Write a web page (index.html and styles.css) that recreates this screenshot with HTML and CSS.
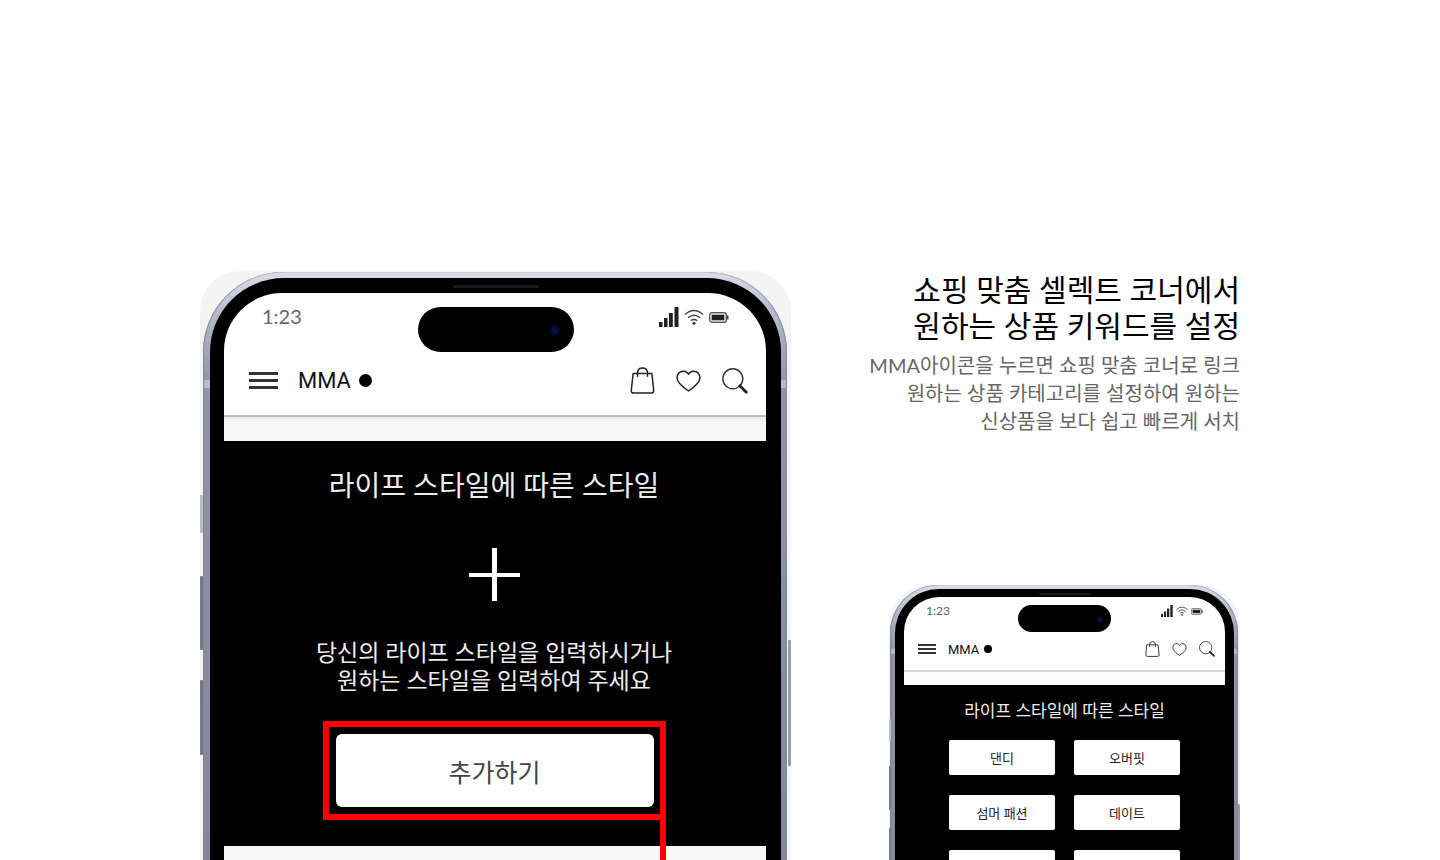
FILE: index.html
```html
<!DOCTYPE html>
<html lang="ko">
<head>
<meta charset="utf-8">
<title>MMA</title>
<link rel="stylesheet" href="styles.css">
</head>
<body>
<svg class="sprite" aria-hidden="true">
  <symbol id="signal" viewBox="0 0 20 20"><path d="M0 15h3.500v5H0zM5 11h3.500v9H5zM10 6h3.800v14H10zM15.500 0h4v20h-4z" fill="#222"/></symbol>
  <symbol id="wifi" viewBox="0 0 20 16"><g fill="none" stroke="#444" stroke-width="1.500"><path d="M1 5.500Q10-2.500 19 5.500M4 8.800Q10 3.600 16 8.800M6.800 11.600Q10 9.200 13.200 11.600"/></g><circle cx="10" cy="14.300" r="1.500" fill="#333"/></symbol>
  <symbol id="battery" viewBox="0 0 20 11"><rect x=".6" y=".6" width="16.800" height="9.800" rx="2.500" fill="#ddd" stroke="#555" stroke-width="1.200"/><rect x="2.800" y="2.800" width="12.400" height="5.400" fill="#222"/><path d="M18 3.500h1.500v4H18z" fill="#444"/></symbol>
  <symbol id="bag" viewBox="0 0 24 27"><g fill="none" stroke="#222" stroke-width="1.500" stroke-linejoin="round" stroke-linecap="round"><path d="M2.600 6.500h18.800L23.200 23.500q.2 2.500-2.400 2.500H3.200Q.6 26 .8 23.500z"/><path d="M7 9.200V6Q7 1 12 1t5 5v3.200"/></g></symbol>
  <symbol id="heart" viewBox="0 0 24 22"><path d="M12 4.200C9.800.2 4.600.5 2.300 3-.2 6.300.5 10.600 3.400 13.800 6 16.800 9 19 12 21c3-2 6-4.200 8.600-7.200 2.900-3.200 3.600-7.500 1.100-10.800C19.400.5 14.200.2 12 4.200z" fill="none" stroke="#222" stroke-width="1.500" stroke-linejoin="round"/></symbol>
  <symbol id="search" viewBox="0 0 26 26"><circle cx="10.800" cy="10.800" r="10" fill="none" stroke="#333" stroke-width="1.400"/><path d="M17.800 17.800l6.500 6.500" stroke="#222" stroke-width="2.800" stroke-linecap="round"/></symbol>
</svg>

<main class="page">
  <section class="phone phone-large">
    <i class="key key-switch"></i><i class="key key-up"></i><i class="key key-down"></i><i class="key key-power"></i>
    <div class="metal"><div class="bezel"><div class="screen">
      <div class="status">
        <span class="time">1:23</span>
        <span class="island"><i class="lens"></i></span>
        <span class="signals">
          <svg class="signal"><use href="#signal"/></svg>
          <svg class="wifi"><use href="#wifi"/></svg>
          <svg class="battery"><use href="#battery"/></svg>
        </span>
      </div>
      <header class="bar">
        <button class="menu" aria-label="메뉴"><i></i><i></i><i></i></button>
        <a class="brand" href="#">MMA<i class="dot"></i></a>
        <nav class="tools">
          <button aria-label="장바구니"><svg class="bag"><use href="#bag"/></svg></button>
          <button aria-label="찜"><svg class="heart"><use href="#heart"/></svg></button>
          <button aria-label="검색"><svg class="search"><use href="#search"/></svg></button>
        </nav>
      </header>
      <div class="strip"></div>
      <div class="panel">
        <h2 class="title">라이프 스타일에 따른 스타일</h2>
        <div class="plus"></div>
        <p class="prompt">당신의 라이프 스타일을 입력하시거나<br>원하는 스타일을 입력하여 주세요</p>
        <div class="marker"><button class="add">추가하기</button></div>
      </div>
      <div class="below"></div>
    </div></div></div>
  </section>

  <div class="side">
    <div class="copy">
      <h1>쇼핑 맞춤 셀렉트 코너에서<br>원하는 상품 키워드를 설정</h1>
      <p>MMA아이콘을 누르면 쇼핑 맞춤 코너로 링크<br>원하는 상품 카테고리를 설정하여 원하는<br>신상품을 보다 쉽고 빠르게 서치</p>
    </div>
    <section class="phone phone-small">
      <i class="key key-switch"></i><i class="key key-up"></i><i class="key key-down"></i><i class="key key-power"></i>
      <div class="metal"><div class="bezel"><div class="screen">
        <div class="status">
          <span class="time">1:23</span>
          <span class="island"><i class="lens"></i></span>
          <span class="signals">
            <svg class="signal"><use href="#signal"/></svg>
            <svg class="wifi"><use href="#wifi"/></svg>
            <svg class="battery"><use href="#battery"/></svg>
          </span>
        </div>
        <header class="bar">
          <button class="menu" aria-label="메뉴"><i></i><i></i><i></i></button>
          <a class="brand" href="#">MMA<i class="dot"></i></a>
          <nav class="tools">
            <button aria-label="장바구니"><svg class="bag"><use href="#bag"/></svg></button>
            <button aria-label="찜"><svg class="heart"><use href="#heart"/></svg></button>
            <button aria-label="검색"><svg class="search"><use href="#search"/></svg></button>
          </nav>
        </header>
        <div class="strip"></div>
        <div class="panel">
          <h2 class="title">라이프 스타일에 따른 스타일</h2>
          <div class="tags">
            <button>댄디</button><button>오버핏</button>
            <button>섬머 패션</button><button>데이트</button>
            <button aria-label="스타일 5"></button><button aria-label="스타일 6"></button>
          </div>
        </div>
      </div></div></div>
    </section>
  </div>
</main>
</body>
</html>
```
FILE: styles.css
```css
* { box-sizing: border-box; margin: 0; padding: 0; }
body {
  height: 100vh;
  overflow: hidden;
  background: #fff;
  color: #000;
  font-family: Lato, "Noto Sans CJK KR", sans-serif;
}
button { border: 0; background: none; font: inherit; color: inherit; cursor: pointer; }
a { color: inherit; text-decoration: none; }
svg { display: block; }
.sprite { position: absolute; width: 0; height: 0; }

.page {
  display: flex;
  justify-content: space-between;
  align-items: flex-start;
  max-width: 1040px;
  margin: 0 auto;
  padding-top: 271px;
}
.side { display: flex; flex-direction: column; align-items: flex-end; gap: 150px; }
.copy { text-align: right; }
.copy h1 { font-size: 30px; font-weight: 400; line-height: 36px; }
.copy p { margin-top: 8px; font-size: 20px; line-height: 28px; color: #666; }

/* Device shell */
.phone { position: relative; background: #f4f4f4; }
.metal {
  background: linear-gradient(#dcdde8 0, #b9bbca 40px, #9496a8 108px, #b9bbc8 108px, #b9bbc8 116px, #9294a6 116px, #7c7e91 100%);
  box-shadow: inset 1px 0 1px #85879a, inset -1px 0 1px #85879a;
}
.bezel { position: relative; background: #000; }
.bezel::before {
  content: "";
  position: absolute;
  left: 50%;
  transform: translateX(-50%);
  background: #1b1a22;
  border-radius: 2px;
}
.screen { overflow: hidden; background: #fff; }
.key { position: absolute; width: 3px; background: #777a8c; border-radius: 1px; }
.key-switch { background: #b9bbc8; }
.key-power { right: 0; background: #9a9cac; }

/* Status row and app bar */
.status { display: grid; align-items: start; }
.time { color: #666; }
.island { display: flex; align-items: center; justify-content: flex-end; background: #000; }
.lens { border-radius: 50%; background: radial-gradient(circle at 60% 60%, #061a50, #02031a 50%, #000); }
.signals { display: flex; align-items: center; justify-content: flex-end; }
.bar { display: flex; align-items: center; }
.menu { display: flex; flex-direction: column; }
.menu i { background: #333; }
.brand { display: flex; align-items: center; font-family: Roboto, sans-serif; color: #111; }
.dot { border-radius: 50%; background: #000; }
.tools { display: flex; align-items: center; margin-left: auto; }
.panel { display: flex; flex-direction: column; align-items: center; background: #000; color: #eee; }
.title { font-weight: 400; }

/* Large phone */
.phone-large { flex: 0 1 591px; padding: 1px 4px 0 3px; border-radius: 40px 40px 0 0; }
.phone-large .metal { padding: 6px 6px 0 7px; border-radius: 80px 80px 0 0; }
.phone-large .bezel { padding: 15px 15px 0 14px; border-radius: 74px 74px 0 0; }
.phone-large .bezel::before { top: 7px; width: 86px; height: 3px; }
.phone-large .screen { border-radius: 58px 58px 0 0; }
.phone-large .key { left: 0; }
.phone-large .key-switch { top: 224px; height: 38px; }
.phone-large .key-up { top: 305px; height: 74px; }
.phone-large .key-down { top: 409px; height: 75px; }
.phone-large .key-power { left: auto; right: 0; top: 369px; height: 126px; }
.phone-large .status { grid-template-columns: 1fr 156px 1fr; padding: 14px 37px 0 38px; }
.phone-large .time { font-size: 20px; line-height: 18px; }
.phone-large .island { height: 45px; padding-right: 14px; border-radius: 23px; }
.phone-large .lens { width: 13px; height: 13px; }
.phone-large .signals { gap: 5px; height: 20px; }
.phone-large .signal { width: 20px; height: 20px; }
.phone-large .wifi { width: 20px; height: 16px; }
.phone-large .battery { width: 20px; height: 11px; }
.phone-large .bar { height: 63px; padding: 0 18px 6px 25px; }
.phone-large .menu { width: 29px; gap: 4px; }
.phone-large .menu i { height: 3px; }
.phone-large .brand { margin-left: 20px; gap: 8px; font-size: 22px; }
.phone-large .dot { width: 13px; height: 13px; }
.phone-large .tools { gap: 21px; }
.phone-large .bag { width: 25px; height: 27px; }
.phone-large .heart { width: 25px; height: 22px; }
.phone-large .search { width: 26px; height: 26px; }
.phone-large .strip { height: 26px; border-top: 2px solid #bbb; background: linear-gradient(#ececec, #f7f7f7 6px); }
.phone-large .panel { height: 405px; padding: 24px 2px 0 0; }
.phone-large .title { font-size: 28px; line-height: 40px; }
.phone-large .prompt { margin-top: 37px; font-size: 23px; line-height: 28px; text-align: center; }
.plus {
  width: 51px;
  height: 53px;
  margin-top: 43px;
  background:
    linear-gradient(#fff, #fff) center / 100% 4px no-repeat,
    linear-gradient(#fff, #fff) center / 5px 100% no-repeat;
}
.marker { position: relative; width: 343px; margin-top: 27px; padding: 7px 6px 7px 7px; border: 6px solid #f00; }
.marker::after { content: ""; position: absolute; top: 100%; right: -6px; width: 6px; height: 400px; background: #f00; }
.add { width: 100%; height: 73px; border-radius: 6px; background: #fff; color: #444; font-size: 25px; }
.below { height: 300px; background: #f7f7f7; }

/* Small phone */
.phone-small { width: 351px; padding: 0 2px 0 1px; border-radius: 40px 40px 0 0; }
.phone-small .metal { padding: 4px 4px 0 5px; border-radius: 48px 48px 0 0; }
.phone-small .metal { background: linear-gradient(#dcdde8 0, #b9bbca 24px, #9496a8 64px, #b9bbc8 64px, #b9bbc8 69px, #9294a6 69px, #7c7e91 100%); }
.phone-small .bezel { padding: 8px 9px 0; border-radius: 44px 44px 0 0; }
.phone-small .bezel::before { top: 4px; width: 52px; height: 2px; }
.phone-small .screen { border-radius: 35px 35px 0 0; }
.phone-small .key { left: 0; width: 2px; }
.phone-small .key-switch { top: 134px; height: 22px; }
.phone-small .key-up { top: 181px; height: 44px; }
.phone-small .key-down { top: 243px; height: 45px; }
.phone-small .key-power { left: auto; right: 0; top: 219px; height: 75px; }
.phone-small .status { grid-template-columns: 1fr 93px 1fr; padding: 8px 22px 0; }
.phone-small .time { font-size: 12px; line-height: 12px; }
.phone-small .island { height: 27px; padding-right: 8px; border-radius: 14px; }
.phone-small .lens { width: 8px; height: 8px; }
.phone-small .signals { gap: 3px; height: 12px; }
.phone-small .signal { width: 12px; height: 12px; }
.phone-small .wifi { width: 12px; height: 10px; }
.phone-small .battery { width: 12px; height: 7px; }
.phone-small .bar { height: 38px; padding: 0 10px 4px 14px; }
.phone-small .menu { width: 18px; gap: 2px; }
.phone-small .menu i { height: 2px; }
.phone-small .brand { margin-left: 12px; gap: 5px; font-size: 13px; }
.phone-small .dot { width: 8px; height: 8px; }
.phone-small .tools { gap: 12px; }
.phone-small .bag { width: 15px; height: 16px; }
.phone-small .heart { width: 15px; height: 13px; }
.phone-small .search { width: 16px; height: 16px; }
.phone-small .strip { height: 15px; border-top: 2px solid #d5d5d5; background: #fefefe; }
.phone-small .panel { height: 400px; padding-top: 14px; }
.phone-small .title { font-size: 17px; line-height: 24px; }
.tags { display: grid; grid-template-columns: 106px 106px; gap: 20px 19px; margin-top: 17px; }
.tags button { height: 35px; border-radius: 2px; background: #fff; color: #222; font-size: 13px; }
```
